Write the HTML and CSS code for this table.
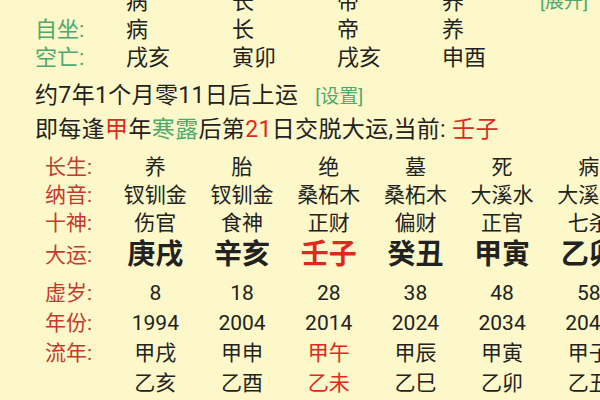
FILE: index.html
```html
<!DOCTYPE html>
<html lang="zh-CN">
<head>
<meta charset="utf-8">
<link rel="stylesheet" href="styles.css">
</head>
<body>
<div class="page">
  <section class="top">
    <div class="trow-top">
      <span class="tlabel"></span>
      <span>病</span><span>长</span><span>帝</span><span>养</span>
      <span class="link">[展开]</span>
    </div>
    <div class="trow-top">
      <span class="tlabel">自坐:</span>
      <span>病</span><span>长</span><span>帝</span><span>养</span>
    </div>
    <div class="trow-top">
      <span class="tlabel">空亡:</span>
      <span>戌亥</span><span>寅卯</span><span>戌亥</span><span>申酉</span>
    </div>
  </section>

  <p class="line first">约7年1个月零11日后上运<span class="link set">[设置]</span></p>
  <p class="line">即每逢<span class="red">甲</span>年<span class="green">寒露</span>后第<span class="red">21</span>日交脱大运,当前: <span class="red">壬子</span></p>

  <section class="table">
    <div class="row">
      <span class="label">长生:</span>
      <span>养</span><span>胎</span><span>绝</span><span>墓</span><span>死</span><span>病</span>
    </div>
    <div class="row">
      <span class="label">纳音:</span>
      <span>钗钏金</span><span>钗钏金</span><span>桑柘木</span><span>桑柘木</span><span>大溪水</span><span>大溪水</span>
    </div>
    <div class="row">
      <span class="label">十神:</span>
      <span>伤官</span><span>食神</span><span>正财</span><span>偏财</span><span>正官</span><span>七杀</span>
    </div>
    <div class="row big">
      <span class="label">大运:</span>
      <span>庚戌</span><span>辛亥</span><span class="red">壬子</span><span>癸丑</span><span>甲寅</span><span>乙卯</span>
    </div>
    <div class="row wide first-wide">
      <span class="label">虚岁:</span>
      <span>8</span><span>18</span><span>28</span><span>38</span><span>48</span><span>58</span>
    </div>
    <div class="row wide">
      <span class="label">年份:</span>
      <span>1994</span><span>2004</span><span>2014</span><span>2024</span><span>2034</span><span>2044</span>
    </div>
    <div class="row wide">
      <span class="label">流年:</span>
      <span>甲戌</span><span>甲申</span><span class="red">甲午</span><span>甲辰</span><span>甲寅</span><span>甲子</span>
    </div>
    <div class="row wide">
      <span class="label"></span>
      <span>乙亥</span><span>乙酉</span><span class="red">乙未</span><span>乙巳</span><span>乙卯</span><span>乙丑</span>
    </div>
  </section>
</div>
</body>
</html>
```

FILE: styles.css
```css
html, body {
  margin: 0;
  padding: 0;
}
body {
  width: 600px;
  height: 400px;
  overflow: hidden;
  background: #fcf8c9;
  color: #222;
  font-family: Roboto, "Noto Sans CJK SC", sans-serif;
}
.page {
  width: 600px;
}
.top {
  margin-top: -12px;
  font-size: 22px;
}
.trow-top {
  display: grid;
  grid-template-columns: 91px 106px 105px 105px 98px auto;
  height: 28px;
  align-items: center;
  padding-left: 35px;
  line-height: 28px;
  white-space: nowrap;
}
.tlabel {
  color: #4fa86c;
}
.link {
  color: #4fa86c;
  font-size: 19px;
  letter-spacing: 0;
}
.line {
  margin: 0;
  padding-left: 35px;
  height: 34px;
  line-height: 34px;
  font-size: 23px;
  letter-spacing: 0.35px;
  white-space: nowrap;
}
.line.first {
  margin-top: 7px;
}
.set {
  margin-left: 17px;
}
.red {
  color: #dd2a20;
}
.green {
  color: #4fa86c;
}
.table {
  margin-top: 6px;
  font-size: 21px;
}
.row {
  display: grid;
  grid-template-columns: 67px repeat(6, 86.7px);
  width: max-content;
  padding-left: 45px;
  height: 28px;
  line-height: 28px;
  align-items: center;
  white-space: nowrap;
}
.row > span {
  text-align: center;
}
.row > .label {
  text-align: left;
  color: #c4392f;
  font-size: 21px;
  font-weight: 400;
}
.row.big {
  height: 36px;
  line-height: 36px;
  font-size: 28px;
  font-weight: 700;
}
.row.wide {
  height: 30px;
  line-height: 30px;
}
.row.first-wide {
  margin-top: 5px;
}
```
